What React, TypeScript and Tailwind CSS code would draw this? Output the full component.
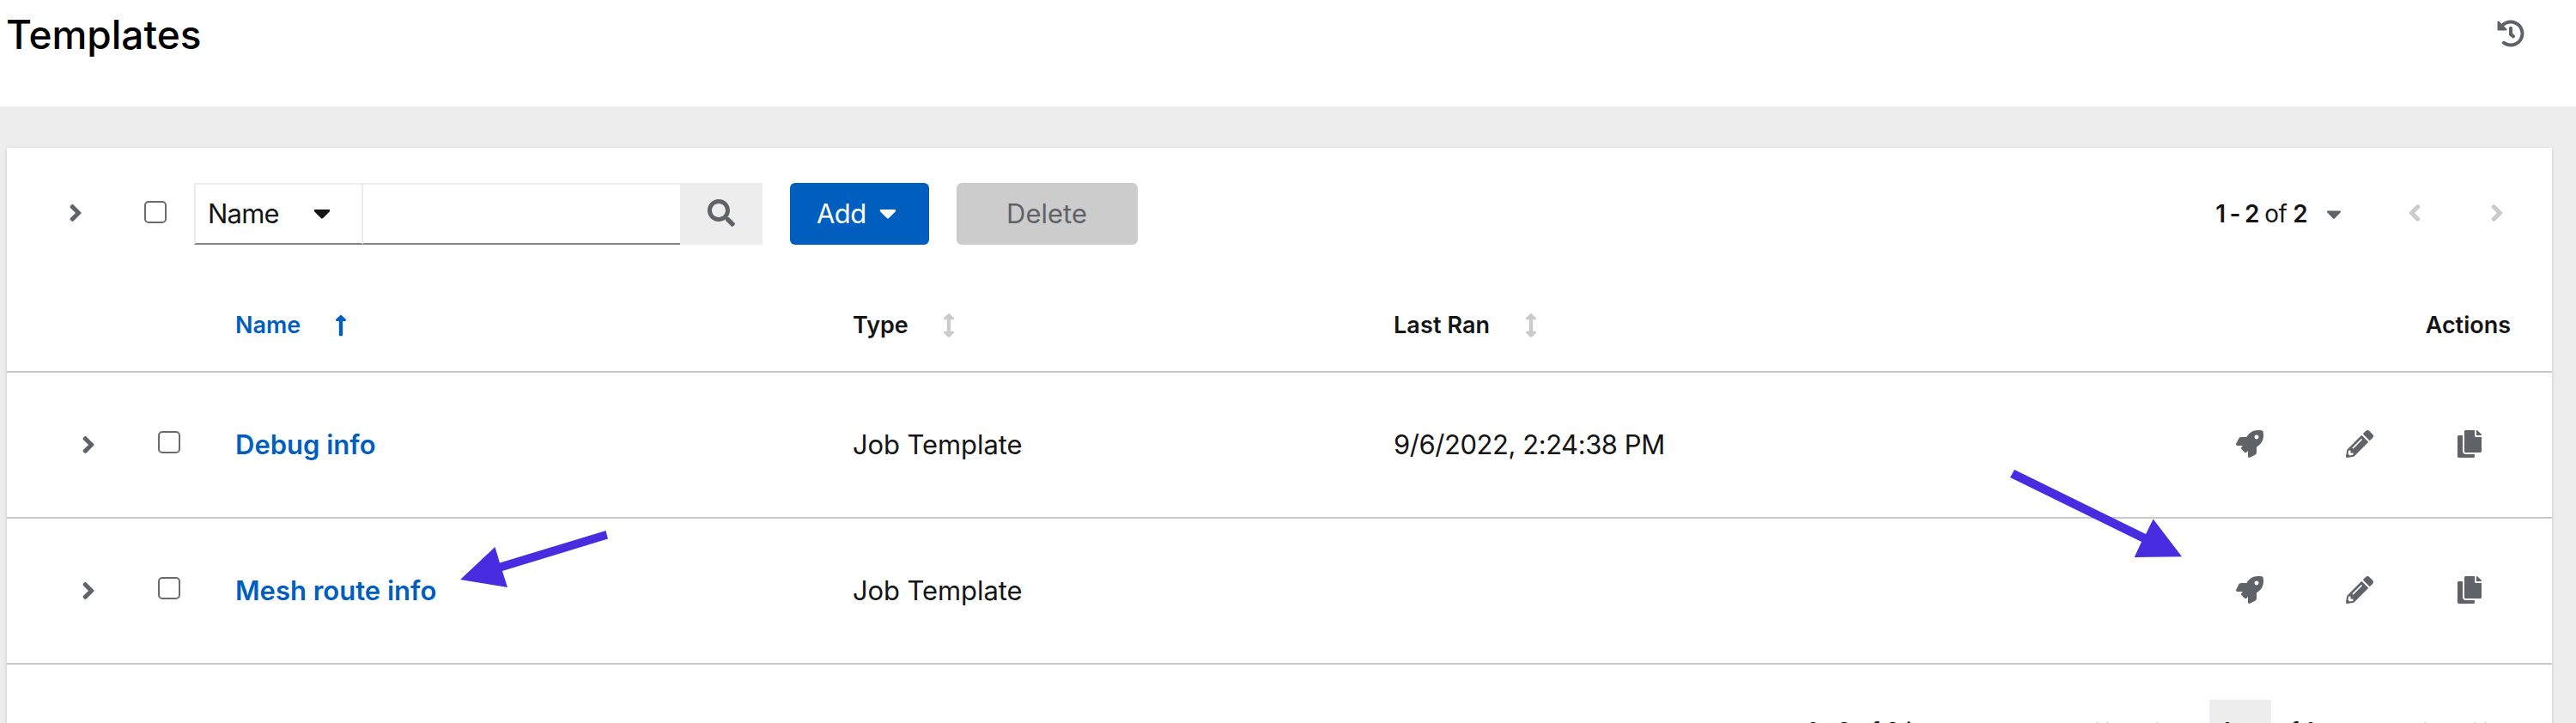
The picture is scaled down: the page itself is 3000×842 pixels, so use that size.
import type { ReactNode } from "react";
import {
  FaAngleDoubleLeft,
  FaAngleDoubleRight,
  FaAngleLeft,
  FaAngleRight,
  FaArrowsAltV,
  FaCaretDown,
  FaCopy,
  FaHistory,
  FaLongArrowAltUp,
  FaPencilAlt,
  FaRocket,
  FaSearch,
} from "react-icons/fa";

const templates = [
  { name: "Debug info", type: "Job Template", lastRan: "9/6/2022, 2:24:38 PM" },
  { name: "Mesh route info", type: "Job Template", lastRan: "" },
];

const columns = "grid grid-cols-[168px_98px_719px_630px_400px_1fr] items-center";

function Checkbox() {
  return (
    <input
      type="checkbox"
      className="block size-[26px] appearance-none rounded-[5px] border-2 border-[#6b6b6b] bg-white"
    />
  );
}

function IconButton({ children, className = "" }: { children: ReactNode; className?: string }) {
  return (
    <button type="button" className={`flex items-center justify-center ${className}`}>
      {children}
    </button>
  );
}

function Header() {
  return (
    <header className="flex h-[124px] items-start justify-between bg-white pr-[60px] pl-[7px]">
      <h1 className="mt-[14px] text-[46px] leading-[52px] font-medium text-black">Templates</h1>
      <IconButton className="mt-[23px] text-[#5f6368]">
        <FaHistory size={32} />
      </IconButton>
    </header>
  );
}

function Toolbar() {
  return (
    <div className="flex h-[154px] items-center pr-[48px] pl-[64px]">
      <IconButton className="mb-[2px] w-8 text-[#5f6368]">
        <FaAngleRight size={32} />
      </IconButton>
      <div className="mb-[4px] ml-[64px]">
        <Checkbox />
      </div>
      <div className="ml-[32px] flex h-[72px]">
        <button
          type="button"
          className="flex w-[197px] items-center justify-between border-2 border-[#ededed] border-b-[#818487] pr-[30px] pl-[14px] text-[31px] tracking-[-0.8px]"
        >
          Name
          <FaCaretDown size={32} className="mb-[2px]" />
        </button>
        <input
          type="text"
          className="w-[369px] border-y-2 border-t-[#ededed] border-b-[#818487] px-4 text-[31px] outline-none"
        />
        <IconButton className="w-24 bg-[#ededed] pb-[2px] text-[#5f6368]">
          <FaSearch size={32} />
        </IconButton>
      </div>
      <button
        type="button"
        className="ml-8 flex h-[72px] w-[162px] items-center rounded-md bg-[#005ebf] pl-[31px] text-[31px] tracking-[-0.6px] text-white"
      >
        Add
        <FaCaretDown size={32} className="mb-[2px] ml-[9px]" />
      </button>
      <button
        type="button"
        className="ml-8 h-[72px] w-[211px] rounded-md bg-[#cccccc] pr-[1px] text-[31px] text-[#5f6368]"
      >
        Delete
      </button>
      <div className="ml-auto flex items-center">
        <span className="text-[28px] tracking-[-0.7px] whitespace-nowrap">
          <b className="font-semibold tracking-[-1.3px]">1 - 2</b> of <b className="font-semibold">2</b>
        </span>
        <FaCaretDown size={28} className="ml-[17px] text-[#5f6368]" />
        <IconButton className="mb-[2px] ml-[64px] w-8 text-[#cbcbcb]">
          <FaAngleLeft size={32} />
        </IconButton>
        <IconButton className="mb-[2px] ml-[64px] w-8 text-[#cbcbcb]">
          <FaAngleRight size={32} />
        </IconButton>
      </div>
    </div>
  );
}

function TableHead() {
  return (
    <div className={`${columns} h-[108px] border-b-2 border-[#c9c9c9] text-[27px] font-semibold`}>
      <span className="col-start-3 flex items-center text-[#005ebf]">
        Name
        <FaLongArrowAltUp size={28} className="ml-[33px]" />
      </span>
      <span className="flex items-center">
        Type
        <FaArrowsAltV size={28} className="ml-[33px] text-[#cbcbcb]" />
      </span>
      <span className="flex items-center tracking-[0.1px]">
        Last Ran
        <FaArrowsAltV size={28} className="ml-[34px] text-[#cbcbcb]" />
      </span>
      <span className="pr-12 text-right">Actions</span>
    </div>
  );
}

function TableRow({ name, type, lastRan }: (typeof templates)[number]) {
  return (
    <div className={`${columns} h-[170px] border-b-2 border-[#c9c9c9] text-[31px]`}>
      <IconButton className="ml-[79px] w-8 text-[#5f6368]">
        <FaAngleRight size={32} />
      </IconButton>
      <div className="mb-[6px] ml-[8px]">
        <Checkbox />
      </div>
      <a className="font-semibold text-[#005ebf]">{name}</a>
      <span className="tracking-[-0.1px]">{type}</span>
      <span className="tracking-[-0.45px] whitespace-nowrap">{lastRan}</span>
      <div className="flex items-center justify-end gap-24 pr-[80px] pb-[2px] text-[#5f6368]">
        <IconButton>
          <FaRocket size={32} />
        </IconButton>
        <IconButton>
          <FaPencilAlt size={32} />
        </IconButton>
        <IconButton>
          <FaCopy size={32} />
        </IconButton>
      </div>
    </div>
  );
}

function FooterPagination() {
  return (
    <div className="mt-[41px] flex h-[72px] items-center justify-end pr-[64px] text-[28px] whitespace-nowrap">
      <div className="flex w-[325px] items-center pt-[2px] tracking-[-0.7px]">
        <span>
          <b className="font-semibold tracking-[-1px]">1 - 2</b> of <b className="font-semibold">2</b> items
        </span>
        <FaCaretDown size={28} className="ml-[17px] text-[#5f6368]" />
      </div>
      <IconButton className="w-8 text-[#cbcbcb]">
        <FaAngleDoubleLeft size={32} />
      </IconButton>
      <IconButton className="ml-8 w-8 text-[#cbcbcb]">
        <FaAngleLeft size={32} />
      </IconButton>
      <div className="ml-12 flex h-[72px] w-[72px] items-center bg-[#ededed] pt-[2px] pl-[14px]">1</div>
      <span className="ml-[6px] w-[161px] pt-[2px] tracking-[-0.7px]">of 1 page</span>
      <IconButton className="w-8 text-[#cbcbcb]">
        <FaAngleRight size={32} />
      </IconButton>
      <IconButton className="ml-8 w-8 text-[#cbcbcb]">
        <FaAngleDoubleRight size={32} />
      </IconButton>
    </div>
  );
}

function Annotations() {
  return (
    <svg
      className="pointer-events-none absolute inset-0"
      width="3000"
      height="842"
      viewBox="0 0 3000 842"
      fill="#482de0"
    >
      <polygon points="536,675 576.5,637 582,655.5 705.5,618 708,627.5 585,665 591,684" />
      <polygon points="2346,547 2499,622 2507.6,604.5 2541,648.3 2485.7,649 2494,631 2341,556" />
    </svg>
  );
}

export default function App() {
  return (
    <div className="relative h-[842px] w-[3000px] overflow-hidden bg-[#ededed] font-['Inter',sans-serif] text-[#151515]">
      <Header />
      <main className="mt-12 mr-7 ml-2 h-[720px] bg-white shadow-[0_2px_4px_rgba(3,3,3,0.12),0_0_4px_rgba(3,3,3,0.06)]">
        <Toolbar />
        <TableHead />
        {templates.map((template) => (
          <TableRow key={template.name} {...template} />
        ))}
        <FooterPagination />
      </main>
      <Annotations />
    </div>
  );
}
